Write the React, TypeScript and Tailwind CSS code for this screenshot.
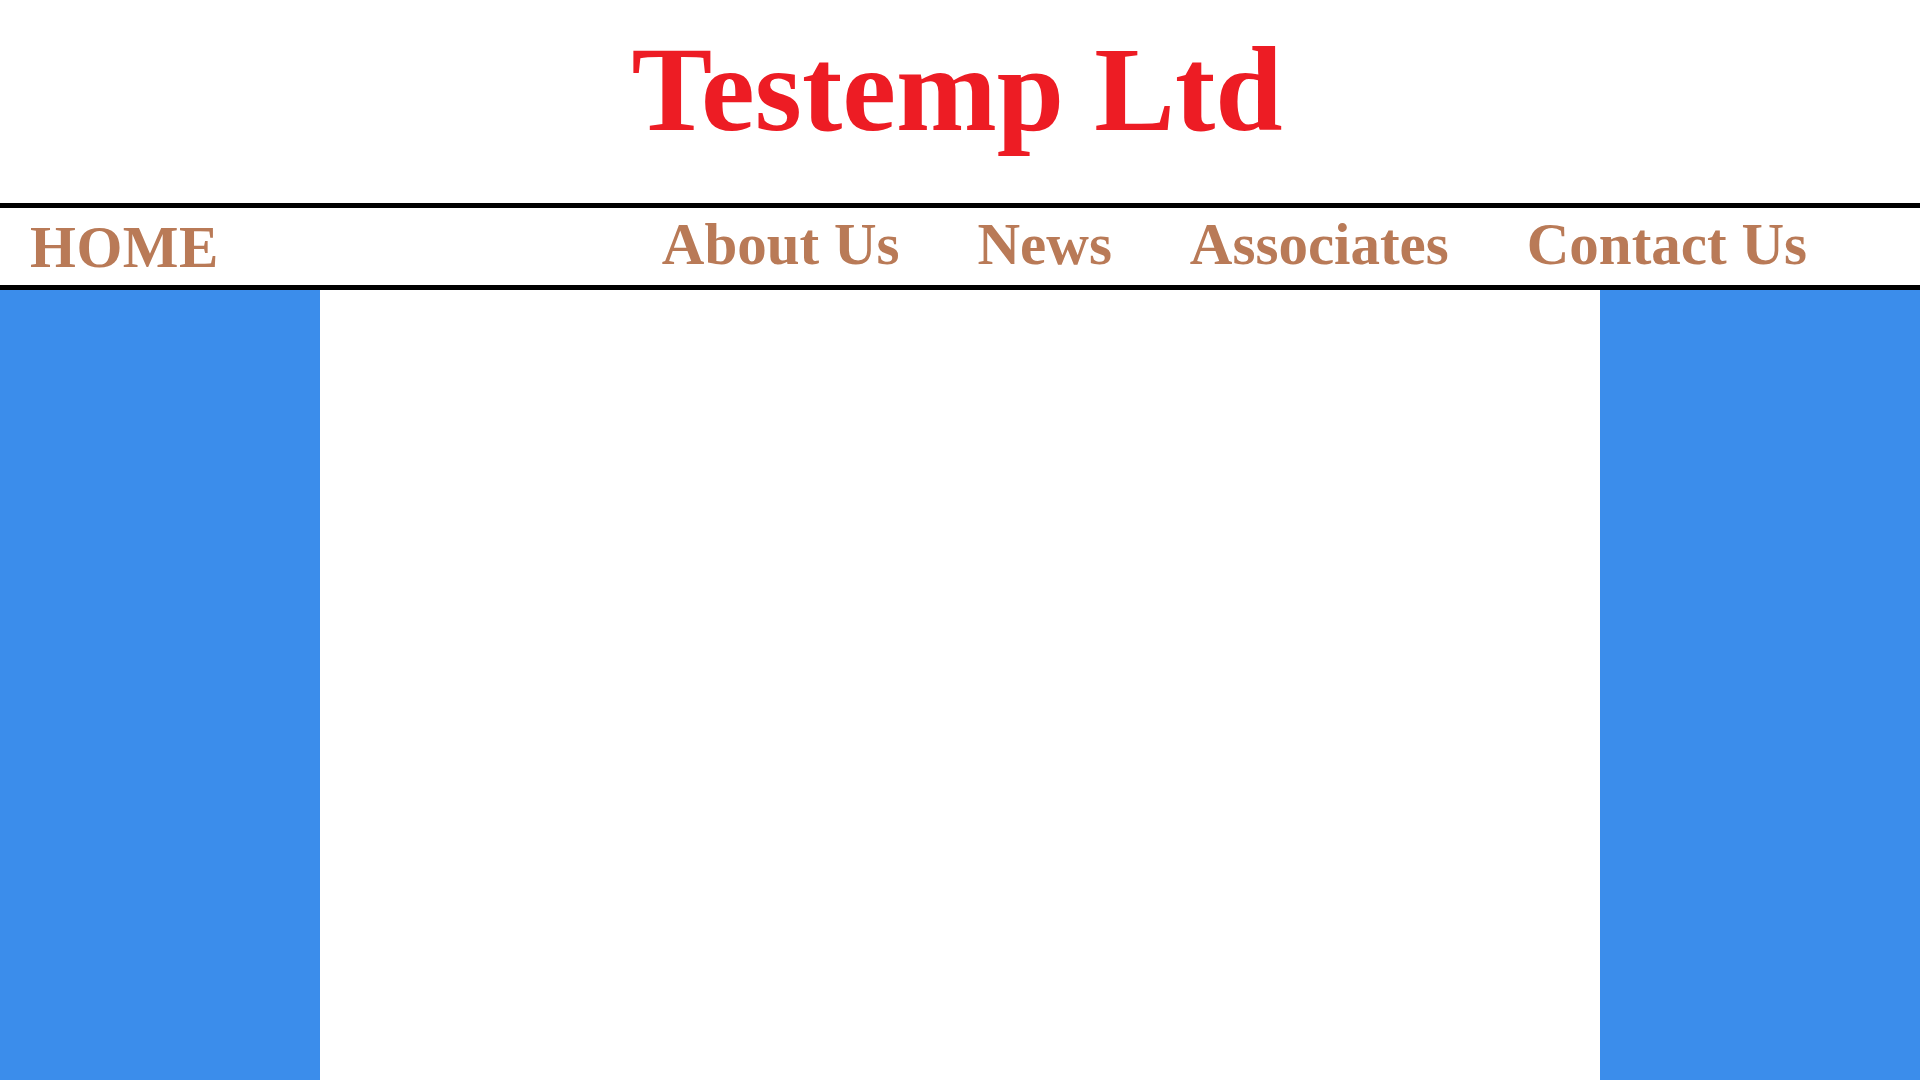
import React from 'react'

const NAV_LINKS = ['About Us', 'News', 'Associates', 'Contact Us']

export default function App() {
  return (
    <div className="flex flex-col h-screen bg-white font-['Liberation_Serif','Times_New_Roman',serif] font-bold overflow-hidden">
      {/* Title */}
      <header className="h-[203px] pt-[29px] pr-[6px] flex justify-center">
        <h1 className="text-[121px] leading-none text-[#ed1c24]">Testemp Ltd</h1>
      </header>

      {/* Nav bar */}
      <nav className="h-[87px] border-y-[5px] border-black flex items-start text-[59px] leading-none text-[#b97a57]">
        <a className="pl-[30px] mt-[10px] tracking-[0.5px]">HOME</a>
        <div className="ml-auto mt-[7px] pr-[113px] flex gap-[78px]">
          {NAV_LINKS.map(link => (
            <a key={link}>{link}</a>
          ))}
        </div>
      </nav>

      {/* Body columns */}
      <main className="flex-1 grid grid-cols-[320px_1fr_320px]">
        <aside className="bg-[#3b8deb]" />
        <section className="bg-white" />
        <aside className="bg-[#3b8deb]" />
      </main>
    </div>
  )
}
